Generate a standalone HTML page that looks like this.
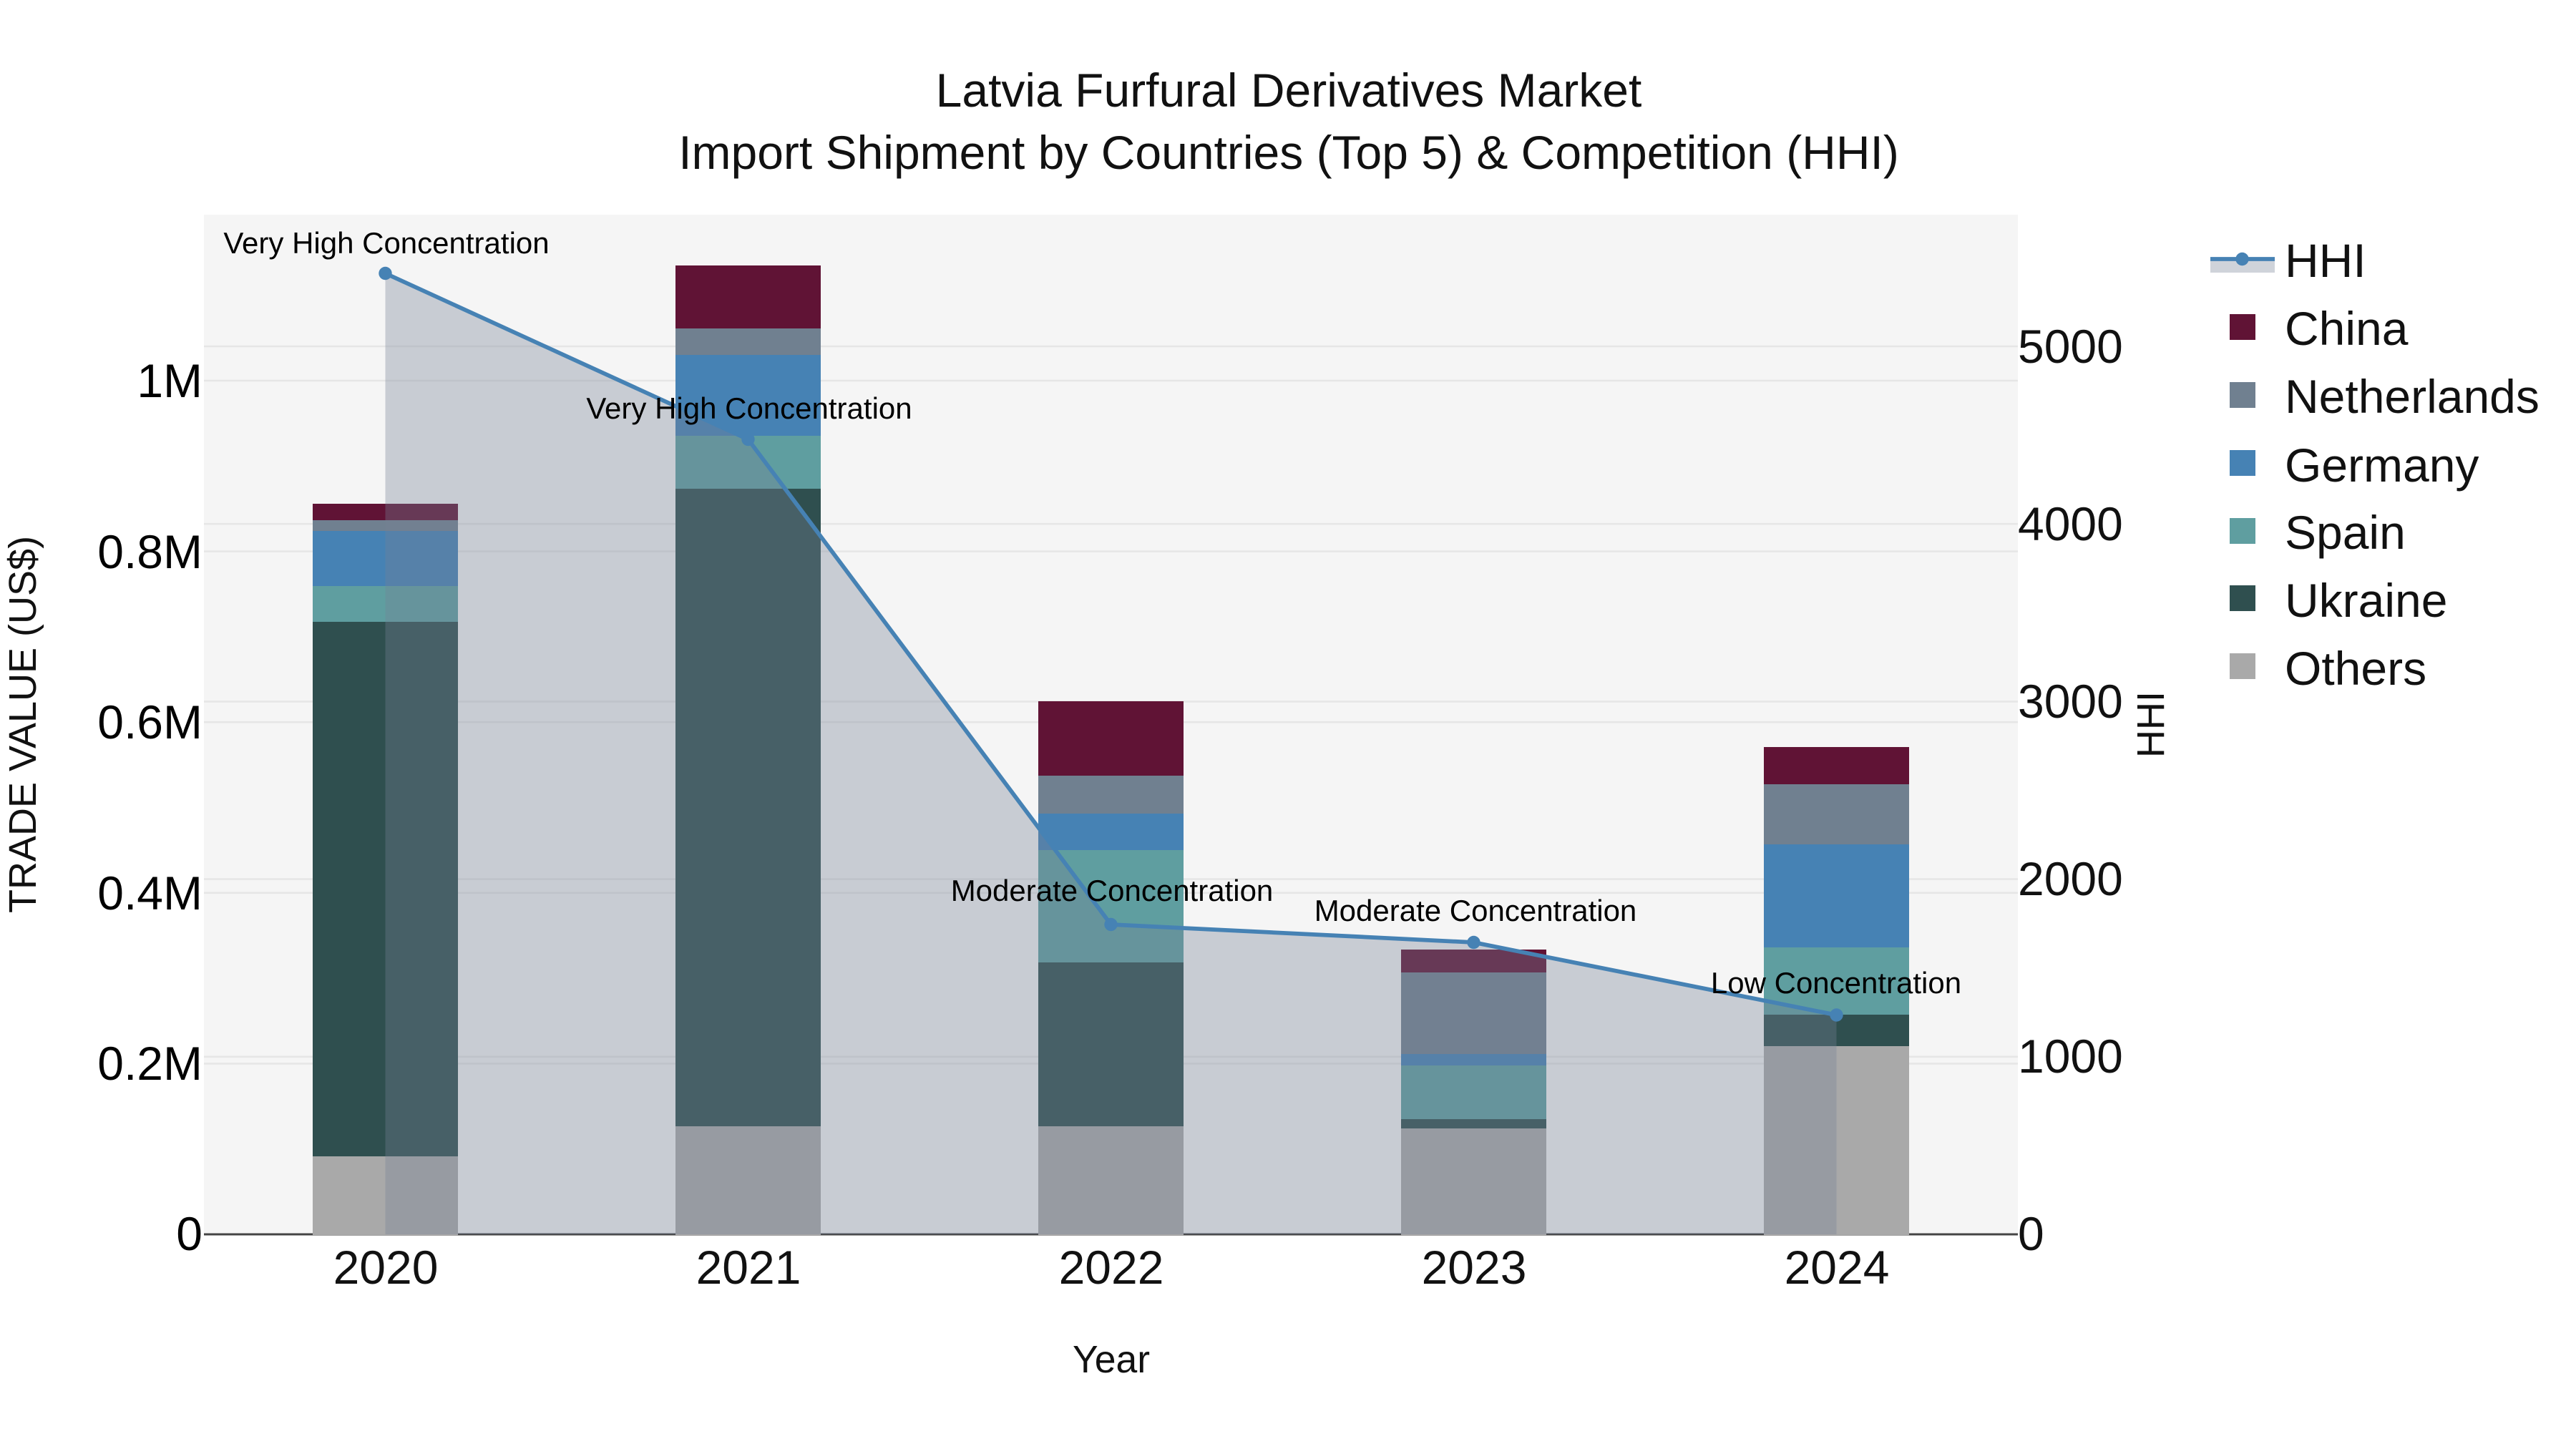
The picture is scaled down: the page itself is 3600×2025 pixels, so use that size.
<!DOCTYPE html>
<html><head><meta charset="utf-8"><title>Latvia Furfural Derivatives Market</title>
<style>html,body{margin:0;padding:0;background:#fff;width:3600px;height:2025px;overflow:hidden}svg{display:block}text{font-family:"Liberation Sans",Arial,sans-serif}</style></head>
<body>
<svg xmlns="http://www.w3.org/2000/svg" width="3600" height="2025" viewBox="0 0 3600 2025">
<rect width="3600" height="2025" fill="#fff"/>
<rect x="285" y="300" width="2535" height="1425" fill="#f5f5f5"/>
<g stroke="#e6e6e6" stroke-width="2.6">
<path d="M285 1486.4H2820M285 1247.8H2820M285 1009.2H2820M285 770.6H2820M285 532H2820"/>
<path d="M285 1476.8H2820M285 1228.6H2820M285 980.4H2820M285 732.2H2820M285 484H2820"/>
</g>
<path d="M285 1725H2820" stroke="#444" stroke-width="3"/>
<g shape-rendering="crispEdges">
<!-- 2020 -->
<rect x="437" y="704" width="203" height="23" fill="#601335"/>
<rect x="437" y="727" width="203" height="15" fill="#708090"/>
<rect x="437" y="742" width="203" height="77" fill="#4682b4"/>
<rect x="437" y="819" width="203" height="50" fill="#5f9ea0"/>
<rect x="437" y="869" width="203" height="747" fill="#2f4f4f"/>
<rect x="437" y="1616" width="203" height="110" fill="#a9a9a9"/>
<!-- 2021 -->
<rect x="944" y="371" width="203" height="88" fill="#601335"/>
<rect x="944" y="459" width="203" height="37" fill="#708090"/>
<rect x="944" y="496" width="203" height="113" fill="#4682b4"/>
<rect x="944" y="609" width="203" height="74" fill="#5f9ea0"/>
<rect x="944" y="683" width="203" height="891" fill="#2f4f4f"/>
<rect x="944" y="1574" width="203" height="152" fill="#a9a9a9"/>
<!-- 2022 -->
<rect x="1451" y="980" width="203" height="104" fill="#601335"/>
<rect x="1451" y="1084" width="203" height="53" fill="#708090"/>
<rect x="1451" y="1137" width="203" height="51" fill="#4682b4"/>
<rect x="1451" y="1188" width="203" height="157" fill="#5f9ea0"/>
<rect x="1451" y="1345" width="203" height="229" fill="#2f4f4f"/>
<rect x="1451" y="1574" width="203" height="152" fill="#a9a9a9"/>
<!-- 2023 -->
<rect x="1958" y="1327" width="203" height="32" fill="#601335"/>
<rect x="1958" y="1359" width="203" height="114" fill="#708090"/>
<rect x="1958" y="1473" width="203" height="16" fill="#4682b4"/>
<rect x="1958" y="1489" width="203" height="75" fill="#5f9ea0"/>
<rect x="1958" y="1564" width="203" height="13" fill="#2f4f4f"/>
<rect x="1958" y="1577" width="203" height="149" fill="#a9a9a9"/>
<!-- 2024 -->
<rect x="2465" y="1044" width="203" height="52" fill="#601335"/>
<rect x="2465" y="1096" width="203" height="84" fill="#708090"/>
<rect x="2465" y="1180" width="203" height="144" fill="#4682b4"/>
<rect x="2465" y="1324" width="203" height="94" fill="#5f9ea0"/>
<rect x="2465" y="1418" width="203" height="44" fill="#2f4f4f"/>
<rect x="2465" y="1462" width="203" height="264" fill="#a9a9a9"/>
</g>
<polygon points="538.5,382 1045.5,614 1552.5,1292 2059.5,1317 2566.5,1418.5 2566.5,1725 538.5,1725" fill="rgb(118,130,150)" fill-opacity="0.35"/>
<polyline points="538.5,382 1045.5,614 1552.5,1292 2059.5,1317 2566.5,1418.5" fill="none" stroke="#4682b4" stroke-width="5.75" stroke-linejoin="round"/>
<g fill="#4682b4">
<circle cx="538.5" cy="382" r="9.2"/><circle cx="1045.5" cy="614" r="9.2"/><circle cx="1552.5" cy="1292" r="9.2"/><circle cx="2059.5" cy="1317" r="9.2"/><circle cx="2566.5" cy="1418.5" r="9.2"/>
</g>
<g font-size="42" text-anchor="middle" fill="#000">
<text x="540" y="354">Very High Concentration</text>
<text x="1047" y="585">Very High Concentration</text>
<text x="1554" y="1259">Moderate Concentration</text>
<text x="2062" y="1287">Moderate Concentration</text>
<text x="2566" y="1388">Low Concentration</text>
</g>
<g font-size="66" text-anchor="middle" fill="#111">
<text x="1801" y="149">Latvia Furfural Derivatives Market</text>
<text x="1801" y="236">Import Shipment by Countries (Top 5) &amp; Competition (HHI)</text>
</g>
<g font-size="66" text-anchor="end" fill="#000">
<text x="283" y="1747">0</text>
<text x="283" y="1509">0.2M</text>
<text x="283" y="1271">0.4M</text>
<text x="283" y="1032">0.6M</text>
<text x="283" y="794">0.8M</text>
<text x="283" y="555">1M</text>
</g>
<g font-size="66" fill="#111">
<text x="2820" y="1747">0</text>
<text x="2820" y="1499">1000</text>
<text x="2820" y="1251">2000</text>
<text x="2820" y="1003">3000</text>
<text x="2820" y="755">4000</text>
<text x="2820" y="507">5000</text>
</g>
<g font-size="66" text-anchor="middle" fill="#111">
<text x="539" y="1794">2020</text>
<text x="1046" y="1794">2021</text>
<text x="1553" y="1794">2022</text>
<text x="2060" y="1794">2023</text>
<text x="2567" y="1794">2024</text>
</g>
<text x="1553" y="1918" font-size="53.5" text-anchor="middle" fill="#111">Year</text>
<text transform="translate(50 1012.5) rotate(-90)" font-size="54" text-anchor="middle" fill="#111">TRADE VALUE (US$)</text>
<text transform="translate(3024 1012.5) rotate(-90)" font-size="54" text-anchor="middle" fill="#111">HHI</text>
<!-- legend -->
<rect x="3089" y="362" width="90" height="19" fill="rgb(118,130,150)" fill-opacity="0.35"/>
<path d="M3089 362H3179" stroke="#4682b4" stroke-width="5.75"/>
<circle cx="3133.5" cy="362" r="9.2" fill="#4682b4"/>
<g shape-rendering="crispEdges">
<rect x="3116" y="439" width="36" height="36" fill="#601335"/>
<rect x="3116" y="534" width="36" height="36" fill="#708090"/>
<rect x="3116" y="629" width="36" height="36" fill="#4682b4"/>
<rect x="3116" y="724" width="36" height="36" fill="#5f9ea0"/>
<rect x="3116" y="818" width="36" height="36" fill="#2f4f4f"/>
<rect x="3116" y="913" width="36" height="36" fill="#a9a9a9"/>
</g>
<g font-size="66" fill="#111">
<text x="3193" y="387">HHI</text>
<text x="3193" y="482">China</text>
<text x="3193" y="577">Netherlands</text>
<text x="3193" y="673">Germany</text>
<text x="3193" y="767">Spain</text>
<text x="3193" y="862">Ukraine</text>
<text x="3193" y="957">Others</text>
</g>
</svg>
</body></html>
